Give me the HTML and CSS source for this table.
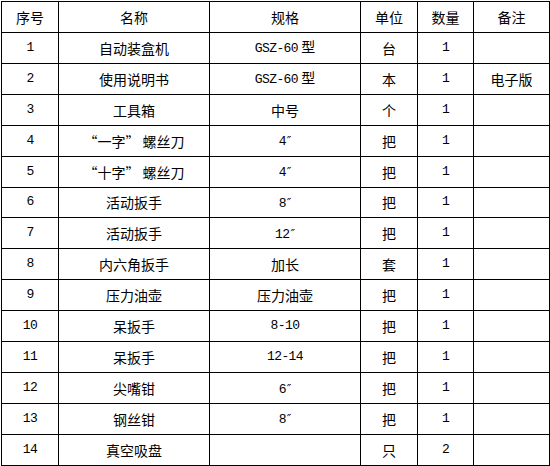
FILE: index.html
```html
<!DOCTYPE html>
<html lang="zh-CN">
<head>
<meta charset="utf-8">
<link rel="stylesheet" href="styles.css">
</head>
<body>
<table class="list">
  <colgroup>
    <col class="c1"><col class="c2"><col class="c3"><col class="c4"><col class="c5"><col class="c6">
  </colgroup>
  <tr class="head"><td>序号</td><td>名称</td><td>规格</td><td>单位</td><td>数量</td><td>备注</td></tr>
  <tr><td class="lat">1</td><td>自动装盒机</td><td><span class="lat">GSZ-60</span> 型</td><td>台</td><td class="lat">1</td><td></td></tr>
  <tr><td class="lat">2</td><td>使用说明书</td><td><span class="lat">GSZ-60</span> 型</td><td>本</td><td class="lat">1</td><td>电子版</td></tr>
  <tr><td class="lat">3</td><td>工具箱</td><td>中号</td><td>个</td><td class="lat">1</td><td></td></tr>
  <tr><td class="lat">4</td><td>“一字” 螺丝刀</td><td><span class="lat">4</span><span class="dp">″</span></td><td>把</td><td class="lat">1</td><td></td></tr>
  <tr><td class="lat">5</td><td>“十字” 螺丝刀</td><td><span class="lat">4</span><span class="dp">″</span></td><td>把</td><td class="lat">1</td><td></td></tr>
  <tr><td class="lat">6</td><td>活动扳手</td><td><span class="lat">8</span><span class="dp">″</span></td><td>把</td><td class="lat">1</td><td></td></tr>
  <tr><td class="lat">7</td><td>活动扳手</td><td><span class="lat">12</span><span class="dp">″</span></td><td>把</td><td class="lat">1</td><td></td></tr>
  <tr><td class="lat">8</td><td>内六角扳手</td><td>加长</td><td>套</td><td class="lat">1</td><td></td></tr>
  <tr><td class="lat">9</td><td>压力油壶</td><td>压力油壶</td><td>把</td><td class="lat">1</td><td></td></tr>
  <tr><td class="lat">10</td><td>呆扳手</td><td class="lat">8-10</td><td>把</td><td class="lat">1</td><td></td></tr>
  <tr><td class="lat">11</td><td>呆扳手</td><td class="lat">12-14</td><td>把</td><td class="lat">1</td><td></td></tr>
  <tr><td class="lat">12</td><td>尖嘴钳</td><td><span class="lat">6</span><span class="dp">″</span></td><td>把</td><td class="lat">1</td><td></td></tr>
  <tr><td class="lat">13</td><td>钢丝钳</td><td><span class="lat">8</span><span class="dp">″</span></td><td>把</td><td class="lat">1</td><td></td></tr>
  <tr><td class="lat">14</td><td>真空吸盘</td><td></td><td>只</td><td class="lat">2</td><td></td></tr>
</table>
</body>
</html>
```
FILE: styles.css
```css
html, body {
  margin: 0;
  padding: 0;
  background: #fff;
}
body {
  padding: 1px 0 0 1px;
}
.list {
  border-collapse: collapse;
  table-layout: fixed;
  width: 549px;
  font-family: "Noto Sans CJK SC", sans-serif;
  font-size: 14px;
  color: #000;
}
.c1 { width: 57px; }
.c2 { width: 151px; }
.c3 { width: 151px; }
.c4 { width: 57px; }
.c5 { width: 56px; }
.c6 { width: 76px; }
.list td {
  border: 1px solid #000;
  height: 29.93px;
  padding: 0;
  text-align: center;
  vertical-align: middle;
  line-height: 16px;
  white-space: nowrap;
}
.list .lat {
  font-family: "Liberation Mono", monospace;
  font-size: 13px;
  letter-spacing: -0.6px;
}
.list .dp {
  font-family: "DejaVu Sans", sans-serif;
  font-size: 12px;
  font-style: italic;
  margin-left: 1px;
}
```
